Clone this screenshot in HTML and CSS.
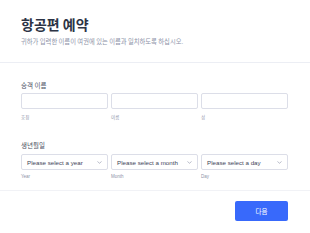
FILE: index.html
```html
<!DOCTYPE html>
<html>
<head>
  <meta charset="utf-8">
  <link rel="stylesheet" href="styles.css">
</head>
<body>
  <div class="form-card">
    <!-- Header -->
    <div class="form-header">
      <h1 class="form-title">항공편 예약</h1>
      <p class="form-subtitle">귀하가 입력한 이름이 여권에 있는 이름과 일치하도록 하십시오.</p>
    </div>

    <!-- Fields -->
    <div class="form-body">
      <div class="field">
        <label class="field-label">승객 이름</label>
        <div class="field-row">
          <div class="field-col">
            <input class="text-input" type="text">
            <span class="sub-label">호칭</span>
          </div>
          <div class="field-col">
            <input class="text-input" type="text">
            <span class="sub-label">이름</span>
          </div>
          <div class="field-col">
            <input class="text-input" type="text">
            <span class="sub-label">성</span>
          </div>
        </div>
      </div>

      <div class="field field-date">
        <label class="field-label">생년월일</label>
        <div class="field-row">
          <div class="field-col">
            <div class="select-box">
              <span>Please select a year</span>
              <svg viewBox="0 0 10 6"><path d="M1.5 1.5l3.5 3 3.5-3"/></svg>
            </div>
            <span class="sub-label">Year</span>
          </div>
          <div class="field-col">
            <div class="select-box">
              <span>Please select a month</span>
              <svg viewBox="0 0 10 6"><path d="M1.5 1.5l3.5 3 3.5-3"/></svg>
            </div>
            <span class="sub-label">Month</span>
          </div>
          <div class="field-col">
            <div class="select-box">
              <span>Please select a day</span>
              <svg viewBox="0 0 10 6"><path d="M1.5 1.5l3.5 3 3.5-3"/></svg>
            </div>
            <span class="sub-label">Day</span>
          </div>
        </div>
      </div>
    </div>

    <!-- Footer -->
    <div class="form-footer">
      <button class="next-btn">다음</button>
    </div>
  </div>
</body>
</html>
```

FILE: styles.css
```css
body {
  margin: 0;
  background: #fff;
  font-family: "Liberation Sans", "Noto Sans CJK KR", sans-serif;
  color: #2c3345;
}

.form-card {
  width: 310px;
}

.form-header {
  padding: 15px 22px 16px 21px;
  border-bottom: 1px solid #eceef4;
}

.form-title {
  margin: 0;
  font-family: "Noto Sans CJK KR", sans-serif;
  font-size: 14px;
  line-height: 18px;
  font-weight: 700;
  color: #2c3345;
}

.form-subtitle {
  margin: 4px 0 0;
  font-family: "Noto Sans CJK KR", sans-serif;
  font-size: 6.3px;
  line-height: 9px;
  color: #8d92a8;
}

.form-body {
  padding: 17px 22px 9px 21px;
  border-bottom: 1px solid #f1f2f6;
}

.field-label {
  display: block;
  font-family: "Noto Sans CJK KR", sans-serif;
  font-size: 6.5px;
  line-height: 10px;
  font-weight: 400;
  color: #4a4f63;
}

.field-row {
  display: flex;
  gap: 3px;
  margin-top: 3px;
}

.field-date {
  margin-top: 18px;
}

.field-date .field-row {
  margin-top: 4px;
}

.field-col {
  flex: 1;
  display: flex;
  flex-direction: column;
  min-width: 0;
}

.text-input {
  box-sizing: border-box;
  width: 100%;
  height: 16px;
  margin: 0;
  border: 1px solid #dcdee8;
  border-radius: 2px;
  background: #fff;
}

.sub-label {
  margin-top: 5px;
  font-family: "Liberation Sans", "Noto Sans CJK KR", sans-serif;
  font-size: 4.5px;
  line-height: 8px;
  color: #8d92a8;
}

.field-date .sub-label {
  margin-top: 3px;
}

.select-box {
  box-sizing: border-box;
  height: 16px;
  display: flex;
  align-items: center;
  justify-content: space-between;
  padding: 0 5px;
  border: 1px solid #dcdee8;
  border-radius: 2px;
  font-size: 6.2px;
  color: #3e4357;
  white-space: nowrap;
}

.select-box svg {
  width: 5px;
  height: 3px;
  fill: none;
  stroke: #8d92a8;
  stroke-width: 1.2;
  stroke-linecap: round;
  stroke-linejoin: round;
}

.form-footer {
  display: flex;
  justify-content: flex-end;
  padding: 10px 22px 0 21px;
}

.next-btn {
  width: 53px;
  height: 20px;
  border: none;
  border-radius: 2px;
  background: #3869fb;
  color: #fff;
  font-family: "Noto Sans CJK KR", sans-serif;
  font-size: 6.5px;
  cursor: pointer;
}
```
